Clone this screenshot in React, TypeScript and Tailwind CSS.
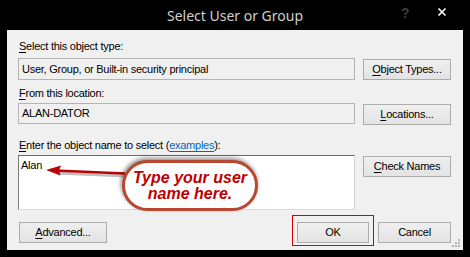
import type { ReactNode } from 'react';

function Btn({ children, className = '' }: { children: ReactNode; className?: string }) {
  return (
    <div
      className={`flex h-[21px] items-center justify-center border border-[#acacac] bg-gradient-to-b from-[#efefef] to-[#e3e3e3] ${className}`}
    >
      {children}
    </div>
  );
}

function U({ children }: { children: ReactNode }) {
  return <span className="underline underline-offset-[2px]">{children}</span>;
}

function Label({ children, className = '' }: { children: ReactNode; className?: string }) {
  return <div className={`h-[14px] pl-[1px] leading-[14px] ${className}`}>{children}</div>;
}

export default function App() {
  return (
    <div className="h-[257px] w-[470px] overflow-hidden bg-black font-['Liberation_Sans',Arial,sans-serif] text-[11px] tracking-[-0.25px] text-black">
      {/* Title bar */}
      <div className="relative flex h-[30px] items-center justify-center">
        <span className="font-['Noto_Sans',sans-serif] text-[14px] tracking-normal text-[#cfcfcf]">
          Select User or Group
        </span>
        <span className="absolute left-[401px] top-[3px] font-['Liberation_Sans',sans-serif] text-[14px] font-bold text-[#3c3c3c]">
          ?
        </span>
        <svg className="absolute left-[437px] top-[7px]" width="10" height="10" viewBox="0 0 10 10" fill="none" stroke="white" strokeWidth="1.6">
          <path d="M1.5 1.5l7 7M8.5 1.5l-7 7" />
        </svg>
      </div>

      {/* Client area */}
      <div className="relative ml-[7px] h-[220px] w-[456px] bg-[#f0f0f0] pl-[11px] pr-[12px] pt-[9px]">
        <Label>
          <U>S</U>elect this object type:
        </Label>
        <div className="mt-[5px] flex items-start gap-[8px]">
          <div className="flex h-[22px] w-[337px] items-center border border-[#b4b4b4] pl-[3px]">
            User, Group, or Built-in security principal
          </div>
          <Btn className="mt-[1px] w-[88px]">
            <span>
              <U>O</U>bject Types...
            </span>
          </Btn>
        </div>

        <Label className="mt-[6px]">
          <U>F</U>rom this location:
        </Label>
        <div className="mt-[3px] flex items-start gap-[8px]">
          <div className="flex h-[21px] w-[337px] items-center border border-[#b4b4b4] pl-[3px]">ALAN-DATOR</div>
          <Btn className="mt-[1px] h-[20px] w-[88px]">
            <span>
              <U>L</U>ocations...
            </span>
          </Btn>
        </div>

        <Label className="mt-[13px]">
          <U>E</U>nter the object name to select (
          <span className="text-[#0066cc] underline underline-offset-[2px]">examples</span>):
        </Label>
        <div className="mt-[3px] flex items-start gap-[8px]">
          <div className="relative h-[55px] w-[337px] border border-b-[#dadada] border-l-[#7a7a7a] border-r-[#d2d2d2] border-t-[#6a6a6a] bg-white pl-[2px] pt-[2px] leading-[14px]">
            Alan
            {/* Annotation arrow */}
            <svg className="absolute left-[22px] top-[6px]" width="86" height="20" viewBox="0 0 86 20">
              <path d="M14 9.5L84 12.5" stroke="rgba(0,0,0,0.25)" strokeWidth="3" transform="translate(1 1.5)" />
              <path d="M14 8.5L84 11.5" stroke="#c00000" strokeWidth="2.5" />
              <path d="M5 8L20 3.5L18 8.6L19.5 13.5Z" fill="#c00000" />
            </svg>
            {/* Annotation callout */}
            <div className="absolute left-[103px] top-[4px] flex h-[51px] w-[136px] flex-col items-center justify-center rounded-full border-[3px] border-[#b8472f] bg-white font-['Liberation_Sans',Arial,sans-serif] text-[16px] font-bold italic leading-[16px] tracking-normal text-[#c00000] shadow-[-1px_-2px_4px_rgba(0,0,0,0.45)]">
              <span>Type your user</span>
              <span>name here.</span>
            </div>
          </div>
          <Btn className="mt-[1px] h-[20px] w-[88px]">
            <span>
              <U>C</U>heck Names
            </span>
          </Btn>
        </div>

        <div className="mt-[12px] flex items-start">
          <Btn className="ml-[1px] w-[88px]">
            <span>
              <U>A</U>dvanced...
            </span>
          </Btn>
          {/* red highlight frame round OK */}
          <div className="-mb-[3px] -mr-[5px] -mt-[7px] ml-auto border border-[#d40000] px-[4px] pb-[2px] pt-[6px]">
            <Btn className="w-[72px]">OK</Btn>
          </div>
          <Btn className="ml-[9px] w-[73px]">Cancel</Btn>
        </div>

        {/* Resize grip */}
        <svg className="absolute bottom-[2px] right-[2px]" width="9" height="9" viewBox="0 0 9 9" fill="#b4b4b4">
          <rect x="6" y="0" width="2" height="2" />
          <rect x="3" y="3" width="2" height="2" />
          <rect x="6" y="3" width="2" height="2" />
          <rect x="0" y="6" width="2" height="2" />
          <rect x="3" y="6" width="2" height="2" />
          <rect x="6" y="6" width="2" height="2" />
        </svg>
      </div>
    </div>
  );
}
